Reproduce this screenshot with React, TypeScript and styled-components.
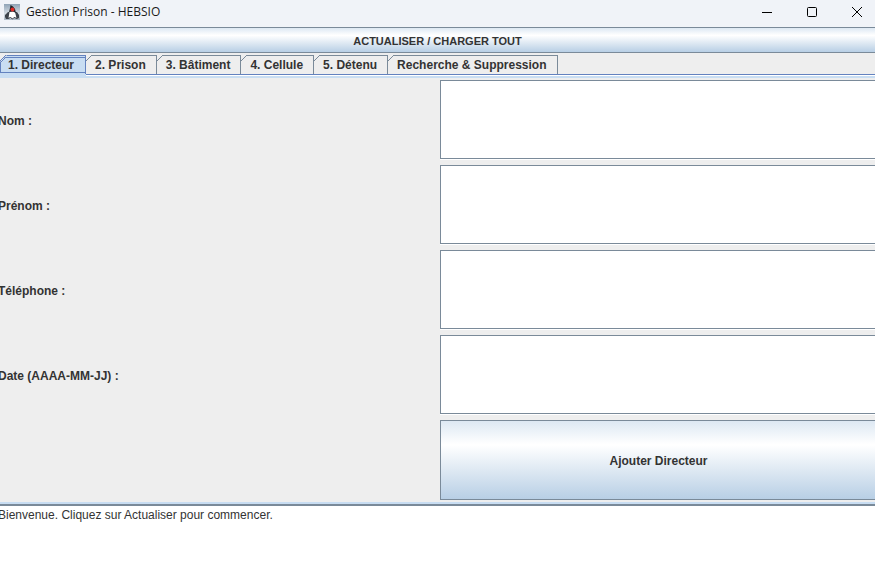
import React, { useState } from "react";
import styled, { createGlobalStyle } from "styled-components";

const line = "#7a8a99";
const accent = "#6382bf";
const pale = "#c8ddf2";
const steel = "linear-gradient(#dde8f3 0%, #ffffff 30%, #ffffff 31%, #b8cfe5 100%)";

const GlobalStyle = createGlobalStyle`
  * { box-sizing: border-box; }
  html, body, #root { height: 100%; }
  body { margin: 0; overflow: hidden; background: #fff; }
`;

const Window = styled.div`
  height: 100%;
  display: flex;
  flex-direction: column;
  background: #eeeeee;
  color: #333333;
  font: bold 12px/16px "Liberation Sans", Arial, sans-serif;
`;

const TitleBar = styled.header`
  height: 27px;
  flex: none;
  display: flex;
  align-items: center;
  padding: 0 4px 4px;
  background: #f0f3f8;
`;

const Title = styled.h1`
  flex: 1;
  margin: 0 0 0 6px;
  color: #1a1a1a;
  font: normal 12px/16px "Open Sans", sans-serif;
`;

const AppIcon = styled.svg`
  width: 16px;
  height: 16px;
`;

const WindowControls = styled.div`
  display: flex;
  gap: 17px;
`;

const WindowButton = styled.button`
  width: 28px;
  height: 22px;
  display: grid;
  place-items: center;
  padding: 0;
  border: 0;
  background: none;
`;

/* The Swing frame is slightly wider than the visible window. */
const Frame = styled.div`
  flex: 1;
  display: flex;
  flex-direction: column;
  margin: 0 -2px;
`;

const MetalButton = styled.button`
  padding: 2px 0 0;
  border: 1px solid ${line};
  background: ${steel};
  color: inherit;
  font: inherit;
`;

const RefreshButton = styled(MetalButton)`
  height: 26px;
  flex: none;
  font-size: 11px;
`;

const TabStrip = styled.div`
  display: flex;
  flex: none;
  margin-top: 2px;
  padding-left: 2px;
  border-bottom: 1px solid ${accent};
`;

const Tab = styled.button<{ $selected: boolean }>`
  position: relative;
  height: 19px;
  padding: ${(p) => (p.$selected ? "0 11px 0 8px" : "0 10px 0 9px")};
  border: 0;
  border-top: 1px solid ${(p) => (p.$selected ? accent : line)};
  border-right: 1px solid ${(p) => (p.$selected ? accent : line)};
  background: ${(p) => (p.$selected ? pale : "#eeeeee")};
  color: inherit;
  font: inherit;
  line-height: 18px;

  /* Focus frame of the open tab. */
  &::before {
    content: "";
    display: ${(p) => (p.$selected ? "block" : "none")};
    position: absolute;
    inset: 1px 0 1px 0;
    border: 1px solid ${accent};
    border-right: 0;
  }

  /* Joins the open tab to the panel below. */
  &::after {
    content: "";
    display: ${(p) => (p.$selected ? "block" : "none")};
    position: absolute;
    top: 100%;
    left: 0;
    right: -1px;
    height: 3px;
    background: ${pale};
  }
`;

const TabCorner = styled.svg`
  position: absolute;
  left: 0;
  top: -1px;
  width: 8px;
  height: 8px;
`;

const Panel = styled.main`
  display: flex;
  flex: none;
  flex-direction: column;
  border-top: 1px solid #ffffff;
  border-bottom: 2px solid ${pale};
`;

const Form = styled.form`
  display: grid;
  grid-template-columns: 1fr 1fr;
  grid-auto-rows: 80px;
  gap: 5px;
  padding: 2px 0;
  border-top: 2px solid ${pale};
`;

const Label = styled.label`
  align-self: center;
  padding-top: 2px;
`;

const Field = styled.input`
  width: 100%;
  height: 79px;
  padding: 0 4px;
  border: 1px solid ${line};
  border-radius: 0;
  box-shadow: 0 1px #ffffff;
  background: #ffffff;
  font: 12px "Liberation Sans", Arial, sans-serif;
  outline: none;
`;

const SubmitButton = styled(MetalButton)`
  grid-column: 2;
`;

const Log = styled.output`
  flex: 1;
  padding-top: 1px;
  border-top: 2px solid ${line};
  background: #ffffff;
  font-size: 12px;
  font-weight: normal;
`;

const tabs = ["1. Directeur", "2. Prison", "3. Bâtiment", "4. Cellule", "5. Détenu", "Recherche & Suppression"];
const fields = [
  { id: "nom", label: "Nom :" },
  { id: "prenom", label: "Prénom :" },
  { id: "telephone", label: "Téléphone :" },
  { id: "date", label: "Date (AAAA-MM-JJ) :" },
];

export default function App() {
  const [selected, setSelected] = useState(0);
  return (
    <Window>
      <GlobalStyle />
      <TitleBar>
        <AppIcon viewBox="0 0 16 16" aria-hidden="true">
          <defs>
            <linearGradient id="sky" x1="0" y1="0" x2="0" y2="1">
              <stop offset="0" stopColor="#8fa3b6" />
              <stop offset="0.6" stopColor="#d5dde4" />
              <stop offset="1" stopColor="#a9b6c2" />
            </linearGradient>
          </defs>
          <rect width="16" height="16" fill="url(#sky)" />
          <path d="M1 11L4 8H6V12L4 15H2L1 13ZM11 8H13L15 11V14L13 15L11 12Z" fill="#3c434b" />
          <path d="M4.500 14L5.500 8H11L12.500 14L10 13L8.500 14.500L6.500 13Z" fill="#ffffff" />
          <path d="M5 8L6 4L6.500 1L9 2.500L11 5L12 9L9 7.500Z" fill="#22262b" />
          <path d="M4 14.500L6.500 13.500L8.500 15L10 13.500L13 14.500" fill="none" stroke="#22262b" strokeWidth=".8" />
          <circle cx="8.500" cy="5.500" r="2" fill="#e02a26" />
        </AppIcon>
        <Title>Gestion Prison - HEBSIO</Title>
        <WindowControls>
          <WindowButton aria-label="Réduire">
            <svg width="10" height="10"><path d="M0 5.5h10" stroke="#000" /></svg>
          </WindowButton>
          <WindowButton aria-label="Agrandir">
            <svg width="10" height="10"><rect x=".5" y=".5" width="9" height="9" rx="1" fill="none" stroke="#000" /></svg>
          </WindowButton>
          <WindowButton aria-label="Fermer">
            <svg width="10" height="10"><path d="M0 0l10 10M10 0L0 10" stroke="#000" /></svg>
          </WindowButton>
        </WindowControls>
      </TitleBar>
      <Frame>
        <RefreshButton>ACTUALISER / CHARGER TOUT</RefreshButton>
        <TabStrip role="tablist">
          {tabs.map((name, i) => (
            <Tab key={name} role="tab" aria-selected={i === selected} $selected={i === selected} onClick={() => setSelected(i)}>
              <TabCorner viewBox="0 0 8 8" aria-hidden="true">
                <path d={i === selected ? "M0 0h7L0 7z" : "M0 0h6L0 6z"} fill="#eeeeee" />
                <path d="M0 6L6 0" stroke={i === selected ? accent : line} />
                {i === selected && <path d="M0 8L6 2" stroke={accent} />}
              </TabCorner>
              {name}
            </Tab>
          ))}
        </TabStrip>
        <Panel>
          <Form onSubmit={(e) => e.preventDefault()}>
            {fields.map((f) => (
              <React.Fragment key={f.id}>
                <Label htmlFor={f.id}>{f.label}</Label>
                <Field id={f.id} />
              </React.Fragment>
            ))}
            <SubmitButton>Ajouter Directeur</SubmitButton>
          </Form>
        </Panel>
        <Log>Bienvenue. Cliquez sur Actualiser pour commencer.</Log>
      </Frame>
    </Window>
  );
}
